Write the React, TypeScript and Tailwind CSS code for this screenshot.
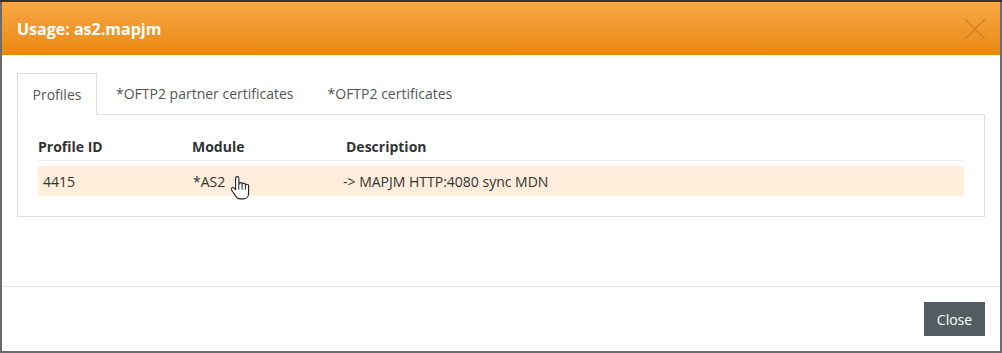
import React from "react";

export default function App() {
  const font = { fontFamily: '"Open Sans", "Noto Sans", sans-serif' };
  return (
    <div className="w-[1002px] h-[353px] bg-[#6b6b6b] border-t-2 border-[#333333] px-[2px] pb-[2px]" style={font}>
      <div className="relative w-[998px] h-[349px] bg-white flex flex-col">
        {/* Header */}
        <div className="h-[53px] flex items-center justify-between pl-[15px] pr-[15px] bg-gradient-to-b from-[#f7a743] to-[#eb8906]">
          <div className="text-white font-bold text-[16px] leading-none">Usage: as2.mapjm</div>
          <svg width="22" height="22" viewBox="0 0 22 22" className="mr-[-1px]">
            <path d="M1 1 L21 21 M21 1 L1 21" stroke="#d27f27" strokeWidth="1.4" fill="none" />
          </svg>
        </div>
        {/* Body */}
        <div className="h-[231px] pt-[18px] px-[15px]">
          <div className="flex h-[41px] text-[14px] text-[#555555]">
            <div className="w-[80px] h-[42px] border border-[#dddddd] border-b-white bg-white flex items-center justify-center relative z-10">
              Profiles
            </div>
            <div className="pl-[19px] pr-[16px] flex items-center">*OFTP2 partner certificates</div>
            <div className="pl-[18px] flex items-center">*OFTP2 certificates</div>
          </div>
          <div className="h-[103px] border border-[#dddddd] pt-[18px] px-[20px] text-[14px] text-[#333333]">
            <div className="grid grid-cols-[154px_154px_1fr] h-[28px] items-center border-b border-[#eeeeee] font-bold">
              <div>Profile ID</div>
              <div>Module</div>
              <div>Description</div>
            </div>
            <div className="mt-[5px] relative grid grid-cols-[154px_151px_1fr] h-[30px] items-center bg-[#feeedb]">
              <div className="pl-[5px]">4415</div>
              <div className="pl-[1px]">*AS2</div>
              <div>-&gt; MAPJM HTTP:4080 sync MDN</div>
              <svg className="absolute left-[193px] top-[9px]" width="20" height="26" viewBox="0 0 18 24">
                <path
                  d="M5.5 1.5c-0.9 0-1.5 0.7-1.5 1.5v10.5l-1.3-1.4c-0.7-0.7-1.7-0.7-2.3 0-0.5 0.6-0.4 1.4 0 2l3.8 5.6c0.9 1.4 2.3 2.3 4 2.3h3c2.8 0 4.8-2.2 4.8-5V10c0-0.8-0.7-1.5-1.5-1.5s-1.5 0.7-1.5 1.5V9c0-0.8-0.7-1.5-1.5-1.5S10 8.2 10 9v-0.5C10 7.7 9.3 7 8.5 7S7 7.7 7 8.5V3c0-0.8-0.6-1.5-1.5-1.5z"
                  fill="#ffffff"
                  stroke="#222222"
                  strokeWidth="1"
                  strokeLinejoin="round"
                />
                <path d="M7 8.5v5 M10 9v4.5 M13 10v3.5" stroke="#222222" strokeWidth="0.9" fill="none" />
              </svg>
            </div>
          </div>
        </div>
        {/* Footer */}
        <div className="flex-1 border-t border-[#e5e5e5] flex justify-end items-start pt-[15px] pr-[15px]">
          <button className="w-[61px] h-[34px] bg-[#525d63] text-white text-[14px] flex items-center justify-center">
            Close
          </button>
        </div>
      </div>
    </div>
  );
}
